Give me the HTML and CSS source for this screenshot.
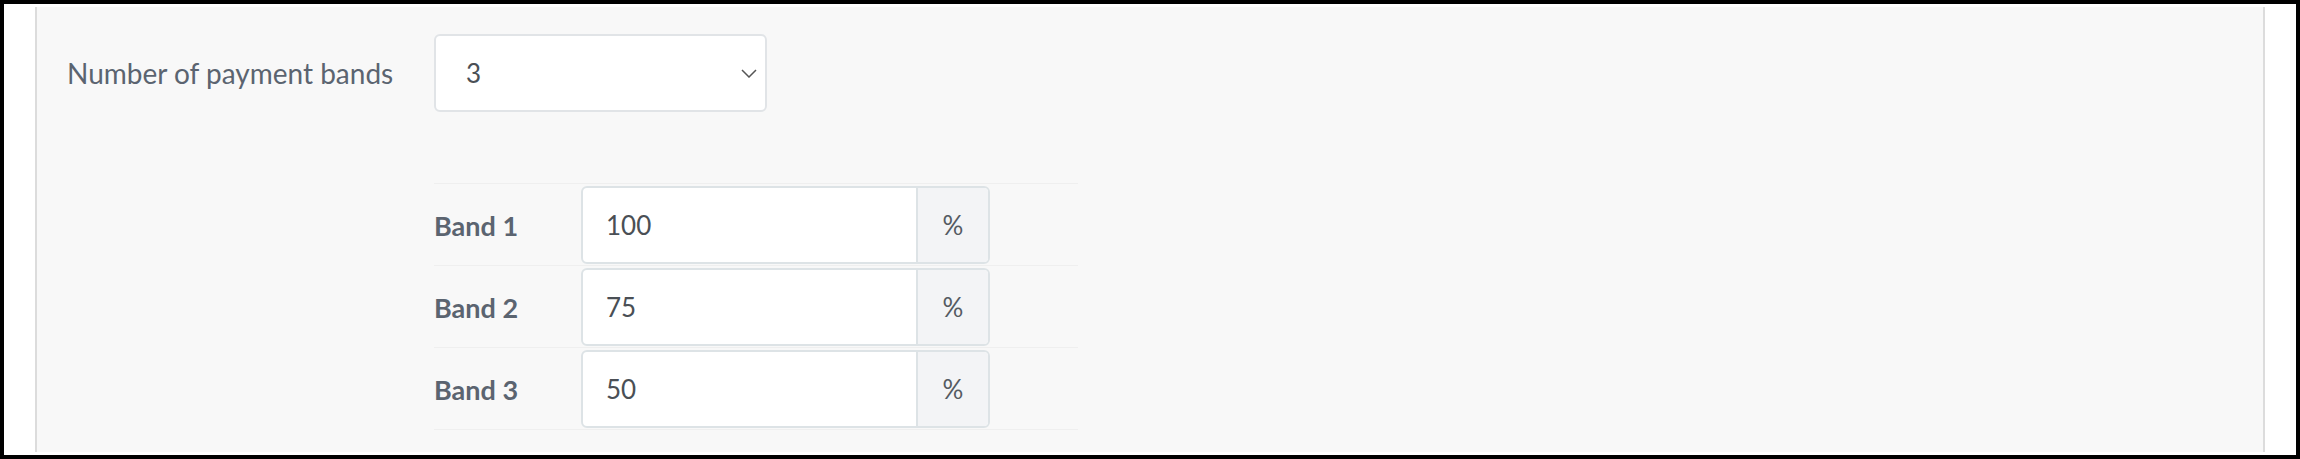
FILE: index.html
```html
<!DOCTYPE html>
<html>
<head>
<meta charset="utf-8">
<link rel="stylesheet" href="styles.css">
</head>
<body>
<div class="page">
  <div class="panel">
    <div class="field">
      <label class="field-label">Number of payment bands</label>
      <div class="field-body">
        <div class="select">
          <span class="select-value">3</span>
          <svg class="chevron" width="16" height="9" viewBox="0 0 16 9"><path d="M1 1 L8 8 L15 1" fill="none" stroke="#555" stroke-width="1.5"/></svg>
        </div>
        <div class="bands">
          <div class="band">
            <span class="band-label">Band 1</span>
            <div class="input-group"><span class="input-value">100</span><span class="addon">%</span></div>
          </div>
          <div class="band">
            <span class="band-label">Band 2</span>
            <div class="input-group"><span class="input-value">75</span><span class="addon">%</span></div>
          </div>
          <div class="band">
            <span class="band-label">Band 3</span>
            <div class="input-group"><span class="input-value">50</span><span class="addon">%</span></div>
          </div>
        </div>
      </div>
    </div>
  </div>
</div>
</body>
</html>
```
FILE: styles.css
```css
html, body {
  margin: 0;
  background: #000;
}
body {
  padding: 4px;
  height: 459px;
  box-sizing: border-box;
  font-family: "Lato", "Liberation Sans", sans-serif;
}
.page {
  background: #fff;
  height: 451px;
  box-sizing: border-box;
  padding: 3px 31px;
}
.panel {
  height: 445px;
  box-sizing: border-box;
  background: #f8f8f8;
  border-left: 2px solid #dcdcdc;
  border-right: 2px solid #dcdcdc;
  padding: 27px 30px 0 30px;
}
.field {
  display: flex;
}
.field-label {
  width: 367px;
  flex: none;
  font-size: 28px;
  color: #5b6470;
  line-height: 78px;
}
.field-body {
  display: flex;
  flex-direction: column;
}
.select {
  width: 333px;
  height: 78px;
  box-sizing: border-box;
  background: #fff;
  border: 2px solid #e1e4e7;
  border-radius: 6px;
  display: flex;
  align-items: center;
  justify-content: space-between;
  padding: 0 8px 0 30px;
  font-size: 26px;
  color: #4a4f55;
}
.bands {
  margin-top: 71px;
  width: 644px;
  border-bottom: 1px solid #efefef;
}
.band {
  display: flex;
  align-items: center;
  border-top: 1px solid #efefef;
  padding: 2px 0 1px;
}
.band-label {
  width: 147px;
  flex: none;
  font-size: 27px;
  font-weight: 700;
  color: #5b6470;
}
.input-group {
  width: 409px;
  height: 78px;
  box-sizing: border-box;
  display: flex;
  border: 2px solid #dde3e6;
  border-radius: 6px;
  overflow: hidden;
  background: #fff;
}
.input-value {
  flex: 1;
  display: flex;
  align-items: center;
  padding-left: 23px;
  font-size: 26px;
  color: #4a4f55;
}
.addon {
  width: 70px;
  flex: none;
  display: flex;
  align-items: center;
  justify-content: center;
  background: #f3f4f6;
  border-left: 2px solid #dde3e6;
  font-size: 26px;
  color: #555b62;
}
```
